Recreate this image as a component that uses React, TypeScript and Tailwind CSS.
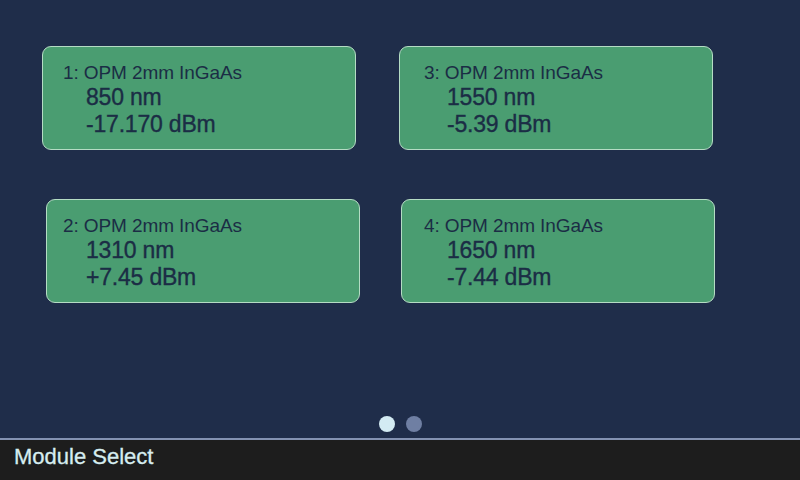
import React from "react";

type Module = { slot: number; wavelength: string; power: string };

const ModuleCard: React.FC<{ m: Module; className?: string }> = ({ m, className }) => {
  return (
    <div
      className={
        "w-[314px] h-[104px] rounded-[9px] border border-[#b5dcc4] bg-[#4a9d71] pt-[15px] text-[#1b2d45] " +
        (className ?? "")
      }
    >
      <p className="text-[19px] leading-[22px] tracking-[-0.1px]">{m.slot}: OPM 2mm InGaAs</p>
      <div className="pl-[23px] text-[23px] leading-[27px] tracking-[-0.2px] [-webkit-text-stroke:0.35px_#1b2d45]">
        <p>{m.wavelength}</p>
        <p>{m.power}</p>
      </div>
    </div>
  );
};

const App: React.FC = () => {
  return (
    <div
      className="w-[800px] h-[480px] flex flex-col bg-[#1f2d4a]"
      style={{ fontFamily: '"Liberation Sans", Arial, sans-serif' }}
    >
      <div className="flex-1 flex flex-col pt-[46px]">
        <div className="flex">
          <ModuleCard
            m={{ slot: 1, wavelength: "850 nm", power: "-17.170 dBm" }}
            className="ml-[42px] pl-[20px]"
          />
          <ModuleCard
            m={{ slot: 3, wavelength: "1550 nm", power: "-5.39 dBm" }}
            className="ml-[43px] pl-[24px]"
          />
        </div>
        <div className="flex mt-[49px]">
          <ModuleCard
            m={{ slot: 2, wavelength: "1310 nm", power: "+7.45 dBm" }}
            className="ml-[46px] pl-[16px]"
          />
          <ModuleCard
            m={{ slot: 4, wavelength: "1650 nm", power: "-7.44 dBm" }}
            className="ml-[41px] pl-[22px]"
          />
        </div>
        <div className="mt-auto mb-[6px] flex justify-center gap-[11px]">
          <span className="w-[16px] h-[16px] rounded-full bg-[#d3ebf3]" />
          <span className="w-[16px] h-[16px] rounded-full bg-[#6f7fa3]" />
        </div>
      </div>
      <div className="h-[2px] bg-[#8392b2]" />
      <div className="h-[40px] bg-[#1d1d1d] flex items-center pl-[14px] pb-[6px]">
        <span className="text-[22px] leading-[26px] text-[#d6edf0] [-webkit-text-stroke:0.3px_#d6edf0]">
          Module Select
        </span>
      </div>
    </div>
  );
};

export default App;
